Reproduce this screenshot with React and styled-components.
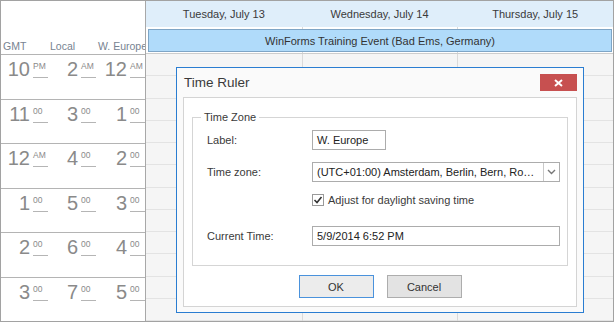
import React from "react";
import styled, { createGlobalStyle } from "styled-components";

const GlobalStyle = createGlobalStyle`
  body {
    margin: 0;
    background: #fff;
    font-family: "Liberation Sans", Arial, sans-serif;
  }
`;

// === Frame ===
const Frame = styled.div`
  position: relative;
  width: 614px;
  height: 322px;
  box-sizing: border-box;
  border: 1px solid #a2a2a2;
  display: flex;
  overflow: hidden;
`;

// === Time ruler ===
const Ruler = styled.div`
  width: 145px;
  flex: none;
  box-sizing: border-box;
  border-right: 1px solid #a8a8a8;
  display: flex;
  flex-direction: column;
  background: #fff;
`;

const RulerHeader = styled.div`
  height: 53px;
  flex: none;
  border-bottom: 1px solid #b4b4b4;
  display: grid;
  grid-template-columns: 47px 48px 49px;
  align-items: end;
`;

const ZoneLabel = styled.div`
  font-size: 10.5px;
  line-height: 12px;
  color: #778391;
  padding: 0 0 2px 2px;
  white-space: nowrap;
  overflow: hidden;
`;

const RulerRow = styled.div`
  flex: 1;
  border-bottom: 1px solid #b4b4b4;
  display: grid;
  grid-template-columns: 47px 48px 49px;
  align-items: start;
  &:last-child {
    border-bottom: none;
  }
`;

const Slot = styled.div`
  display: flex;
  justify-content: flex-end;
  gap: 3px;
  padding-top: 4px;
`;

const Hour = styled.span`
  font-size: 20px;
  line-height: 20px;
  color: #8a8a8a;
`;

const Minutes = styled.span`
  width: 15px;
  height: 19px;
  box-sizing: border-box;
  padding-top: 2px;
  border-bottom: 1px solid #b5b5b5;
  font-size: 8.5px;
  line-height: 10px;
  color: #8a8a8a;
`;

// === Calendar ===
const Calendar = styled.div`
  flex: 1;
  min-width: 0;
  display: flex;
  flex-direction: column;
`;

const DayHeader = styled.div`
  height: 26px;
  flex: none;
  background: #dfeefa;
  display: grid;
  grid-template-columns: repeat(3, 1fr);
`;

const DayTitle = styled.div`
  display: flex;
  align-items: center;
  justify-content: center;
  font-size: 11px;
  color: #3a3a3a;
`;

const AllDay = styled.div`
  height: 26px;
  flex: none;
  border-bottom: 1px solid #cdcdcd;
  background: #fff;
  display: grid;
  grid-template-columns: repeat(3, 1fr);
`;

const AllDayCell = styled.div`
  grid-row: 1;
  grid-column: ${(p) => p.$col};
  border-left: ${(p) => (p.$col > 1 ? "1px solid #dadada" : "none")};
`;

const EventBar = styled.div`
  grid-row: 1;
  grid-column: 1 / -1;
  z-index: 1;
  margin: 2px 1px 1px 2px;
  background: #b0dbfa;
  border: 1px solid #7ea5c6;
  display: flex;
  align-items: center;
  justify-content: center;
  font-size: 11px;
  color: #333;
`;

const Body = styled.div`
  flex: 1;
  display: grid;
  grid-template-columns: repeat(3, 1fr);
  background: #f5f5f5;
`;

const DayColumn = styled.div`
  display: flex;
  flex-direction: column;
  border-left: ${(p) => (p.$first ? "none" : "1px solid #dadada")};
`;

const Cell = styled.div`
  flex: 1;
  border-bottom: 1px solid #e3e3e3;
`;

// === Dialog ===
const Dialog = styled.div`
  position: absolute;
  left: 175px;
  top: 66px;
  width: 408px;
  height: 246px;
  box-sizing: border-box;
  border: 1px solid #2a7dd1;
  background: #fafafa;
  display: flex;
  flex-direction: column;
`;

const TitleBar = styled.div`
  height: 29px;
  flex: none;
  display: flex;
  align-items: center;
  justify-content: space-between;
  padding: 0 6px 0 7px;
`;

const Title = styled.div`
  font-size: 13.5px;
  color: #3a3a3a;
`;

const CloseButton = styled.div`
  width: 37px;
  height: 17px;
  background: #c75050;
  display: flex;
  align-items: center;
  justify-content: center;
`;

const Panel = styled.div`
  flex: 1;
  margin: 0 6px 5px;
  border: 1px solid #d4d4d4;
  background: #fff;
  padding: 19px 8px 7px;
  display: flex;
  flex-direction: column;
`;

const GroupBox = styled.div`
  position: relative;
  border: 1px solid #d5d5d5;
  padding: 12px 7px 19px 14px;
  display: grid;
  grid-template-columns: 105px minmax(0, 1fr);
  grid-auto-rows: 20px;
  row-gap: 12px;
  align-items: center;
`;

const Legend = styled.span`
  position: absolute;
  top: -7px;
  left: 8px;
  padding: 0 3px;
  background: #fff;
  font-size: 11px;
  line-height: 13px;
  color: #3a3a3a;
`;

const FieldLabel = styled.div`
  font-size: 11px;
  color: #3a3a3a;
`;

const TextBox = styled.div`
  width: ${(p) => p.$width || "auto"};
  min-width: 0;
  height: 20px;
  box-sizing: border-box;
  border: 1px solid #acacac;
  background: #fff;
  padding: 0 4px;
  display: flex;
  align-items: center;
  font-size: 11px;
  color: #222;
`;

const SelectBox = styled.div`
  min-width: 0;
  height: 20px;
  box-sizing: border-box;
  border: 1px solid #acacac;
  display: flex;
  font-size: 11px;
  color: #222;
`;

const SelectText = styled.div`
  flex: 1;
  min-width: 0;
  padding: 0 4px;
  line-height: 18px;
  white-space: nowrap;
  overflow: hidden;
  text-overflow: ellipsis;
`;

const DropButton = styled.div`
  width: 15px;
  flex: none;
  border-left: 1px solid #c9c9c9;
  display: flex;
  align-items: center;
  justify-content: center;
`;

const CheckRow = styled.label`
  grid-column: 2;
  align-self: start;
  display: flex;
  align-items: center;
  gap: 4px;
  height: 12px;
  font-size: 11px;
  color: #3a3a3a;
`;

const Buttons = styled.div`
  display: flex;
  justify-content: center;
  gap: 13px;
  margin-top: 9px;
`;

const Button = styled.div`
  width: 75px;
  height: 23px;
  box-sizing: border-box;
  border: 1px solid ${(p) => (p.$primary ? "#4a92dc" : "#adadad")};
  background: ${(p) => (p.$primary ? "#ececec" : "#e3e3e3")};
  display: flex;
  align-items: center;
  justify-content: center;
  font-size: 11px;
  color: #333;
`;

const zones = ["GMT", "Local", "W. Europe"];

const rows = [
  [["10", "PM"], ["2", "AM"], ["12", "AM"]],
  [["11", "00"], ["3", "00"], ["1", "00"]],
  [["12", "AM"], ["4", "00"], ["2", "00"]],
  [["1", "00"], ["5", "00"], ["3", "00"]],
  [["2", "00"], ["6", "00"], ["4", "00"]],
  [["3", "00"], ["7", "00"], ["5", "00"]],
];

const days = ["Tuesday, July 13", "Wednesday, July 14", "Thursday, July 15"];

export const App = () => {
  return (
    <>
      <GlobalStyle />
      <Frame>
        <Ruler>
          <RulerHeader>
            {zones.map((z) => (
              <ZoneLabel key={z}>{z}</ZoneLabel>
            ))}
          </RulerHeader>
          {rows.map((row, i) => (
            <RulerRow key={i}>
              {row.map(([h, m], j) => (
                <Slot key={j}>
                  <Hour>{h}</Hour>
                  <Minutes>{m}</Minutes>
                </Slot>
              ))}
            </RulerRow>
          ))}
        </Ruler>

        <Calendar>
          <DayHeader>
            {days.map((d) => (
              <DayTitle key={d}>{d}</DayTitle>
            ))}
          </DayHeader>
          <AllDay>
            <AllDayCell $col={1} />
            <AllDayCell $col={2} />
            <AllDayCell $col={3} />
            <EventBar>WinForms Training Event (Bad Ems, Germany)</EventBar>
          </AllDay>
          <Body>
            {days.map((d, i) => (
              <DayColumn key={d} $first={i === 0}>
                {Array.from({ length: 12 }).map((_, k) => (
                  <Cell key={k} />
                ))}
              </DayColumn>
            ))}
          </Body>
        </Calendar>

        <Dialog>
          <TitleBar>
            <Title>Time Ruler</Title>
            <CloseButton>
              <svg width="9" height="8" viewBox="0 0 9 8">
                <path d="M1 1 L8 7 M8 1 L1 7" stroke="#fff" strokeWidth="2" />
              </svg>
            </CloseButton>
          </TitleBar>
          <Panel>
            <GroupBox>
              <Legend>Time Zone</Legend>
              <FieldLabel>Label:</FieldLabel>
              <TextBox $width="74px">W. Europe</TextBox>
              <FieldLabel>Time zone:</FieldLabel>
              <SelectBox>
                <SelectText>
                  (UTC+01:00) Amsterdam, Berlin, Bern, Rome, Stockholm, Vienna
                </SelectText>
                <DropButton>
                  <svg width="9" height="6" viewBox="0 0 9 6">
                    <path d="M1 1 L4.5 4.5 L8 1" fill="none" stroke="#777" strokeWidth="1.4" />
                  </svg>
                </DropButton>
              </SelectBox>
              <CheckRow>
                <svg width="12" height="12" viewBox="0 0 12 12">
                  <rect x="0.5" y="0.5" width="11" height="11" fill="#fff" stroke="#9a9a9a" />
                  <path d="M2.5 6 L5 8.5 L9.5 3" fill="none" stroke="#333" strokeWidth="1.6" />
                </svg>
                Adjust for daylight saving time
              </CheckRow>
              <FieldLabel>Current Time:</FieldLabel>
              <TextBox>5/9/2014 6:52 PM</TextBox>
            </GroupBox>
            <Buttons>
              <Button $primary>OK</Button>
              <Button>Cancel</Button>
            </Buttons>
          </Panel>
        </Dialog>
      </Frame>
    </>
  );
};

export default App;
